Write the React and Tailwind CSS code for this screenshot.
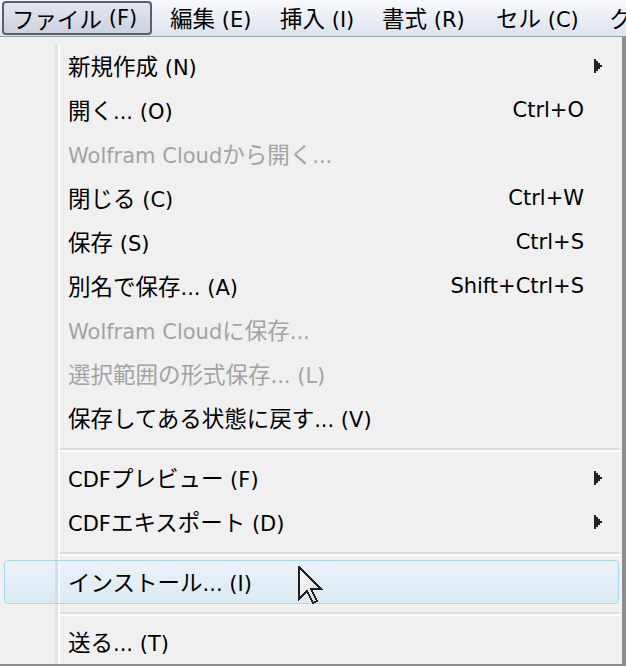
const cjkFont = { fontFamily: '"Noto Sans CJK JP", sans-serif' };
const latinFont = { fontFamily: '"DejaVu Sans", "Noto Sans CJK JP", sans-serif' };

const items = [
  { label: "新規作成 (N)", sub: true },
  { label: "開く... (O)", key: "Ctrl+O" },
  { label: "Wolfram Cloudから開く...", disabled: true },
  { label: "閉じる (C)", key: "Ctrl+W" },
  { label: "保存 (S)", key: "Ctrl+S" },
  { label: "別名で保存... (A)", key: "Shift+Ctrl+S" },
  { label: "Wolfram Cloudに保存...", disabled: true },
  { label: "選択範囲の形式保存... (L)", disabled: true },
  { label: "保存してある状態に戻す... (V)" },
  "sep",
  { label: "CDFプレビュー (F)", sub: true },
  { label: "CDFエキスポート (D)", sub: true },
  "sep",
  { label: "インストール... (I)", active: true },
  "sep",
  { label: "送る... (T)" },
];

const menus = [
  { label: "編集 (E)", w: "w-[110px]" },
  { label: "挿入 (I)", w: "w-[102px]" },
  { label: "書式 (R)", w: "w-[114px]" },
  { label: "セル (C)", w: "w-[114px]" },
  { label: "グラフィックス (G)", w: "w-[200px]" },
];

// Japanese runs get the CJK face a bit larger, Latin runs a Verdana-like face
function Mixed({ text }) {
  const parts = text.split(/([\u3000-\u30ff\u4e00-\u9fff\uff00-\uffef]+)/).filter(Boolean);
  return parts.map((p, i) =>
    /[\u3000-\u30ff\u4e00-\u9fff\uff00-\uffef]/.test(p) ? (
      <span key={i} className="text-[22.5px]" style={cjkFont}>
        {p}
      </span>
    ) : (
      <span key={i} className="text-[21px] whitespace-pre" style={latinFont}>
        {p}
      </span>
    )
  );
}

function Gutter({ width = "w-[55px]", faint }) {
  return (
    <div className="flex h-full shrink-0">
      <div className={width} />
      <div className={faint ? "w-[3px] bg-[#d6dde2]" : "w-[3px] bg-[#e2e3e3]"} />
      <div className={faint ? "w-[2px] bg-[#f2f8fb]" : "w-[2px] bg-white"} />
    </div>
  );
}

function SubArrow() {
  return (
    <svg width="9" height="14" viewBox="0 0 9 14" className="mr-[19px]">
      <path d="M0 0 L0 14 L2 14 L2 12 L4 12 L4 10 L6 10 L6 8 L8 8 L8 6 L6 6 L6 4 L4 4 L4 2 L2 2 L2 0 Z" fill="#222" />
    </svg>
  );
}

function Separator() {
  return (
    <div className="flex h-[16px]">
      <Gutter />
      <div className="flex-1 pt-[8px] pr-[2px]">
        <div className="h-[2px] bg-[#dcdcdc]" />
        <div className="h-[2px] bg-white" />
      </div>
    </div>
  );
}

function Row({ item }) {
  const text = item.disabled ? "text-[#a3a3a3]" : "text-black";
  const inner = (
    <>
      <div className={`flex-1 pl-[8px] ${text}`}>
        <Mixed text={item.label} />
      </div>
      {item.key && (
        <div className="pr-[38px] text-black">
          <Mixed text={item.key} />
        </div>
      )}
      {item.sub && <SubArrow />}
    </>
  );

  if (item.active) {
    return (
      <div className="relative flex h-[44px] items-center ml-[4px] mr-[3px] rounded-[4px] border border-[#a8d7ec] bg-gradient-to-b from-[#eaf2f7] to-[#dbeaf3]">
        <Gutter width="w-[50px]" faint />
        {inner}
        <Cursor />
      </div>
    );
  }

  return (
    <div className="flex h-[44px] items-center">
      <Gutter />
      {inner}
    </div>
  );
}

function Cursor() {
  return (
    <svg
      width="26"
      height="40"
      viewBox="0 0 13 20"
      className="absolute left-[293px] top-[5px]"
      shapeRendering="crispEdges"
    >
      <defs>
        <linearGradient id="cur" x1="0" y1="0" x2="1" y2="1">
          <stop offset="0" stopColor="#ffffff" />
          <stop offset="1" stopColor="#d4d4d4" />
        </linearGradient>
      </defs>
      <path
        d="M0.5 0.5 L0.5 16.5 L4.5 12.5 L7.5 18.5 L9.5 17.5 L6.5 11.5 L11.5 11.5 Z"
        fill="url(#cur)"
        stroke="#1e1e1e"
        strokeWidth="1"
        strokeLinejoin="miter"
      />
    </svg>
  );
}

export default function App() {
  return (
    <div className="w-[626px] h-[666px] overflow-hidden bg-[#8c8c8c] leading-none">
      <div className="flex h-[37px] items-center border-b border-[#979fab] bg-gradient-to-b from-[#f7f9fc] to-[#dde3ee] pl-[2px] whitespace-nowrap text-black">
        <div className="flex h-[34px] w-[150px] shrink-0 items-center rounded-[4px] border-2 border-[#5d5f63] bg-gradient-to-b from-[#e3e7ee] to-[#cbd2de] px-[8px]">
          <Mixed text="ファイル (F)" />
        </div>
        <div className="w-[18px] shrink-0" />
        {menus.map((m) => (
          <div key={m.label} className={`${m.w} shrink-0`}>
            <Mixed text={m.label} />
          </div>
        ))}
      </div>
      <div className="w-[622px] bg-[#f0f0f0] pt-[7px] whitespace-nowrap">
        {items.map((it, i) =>
          it === "sep" ? <Separator key={i} /> : <Row key={i} item={it} />
        )}
      </div>
    </div>
  );
}
